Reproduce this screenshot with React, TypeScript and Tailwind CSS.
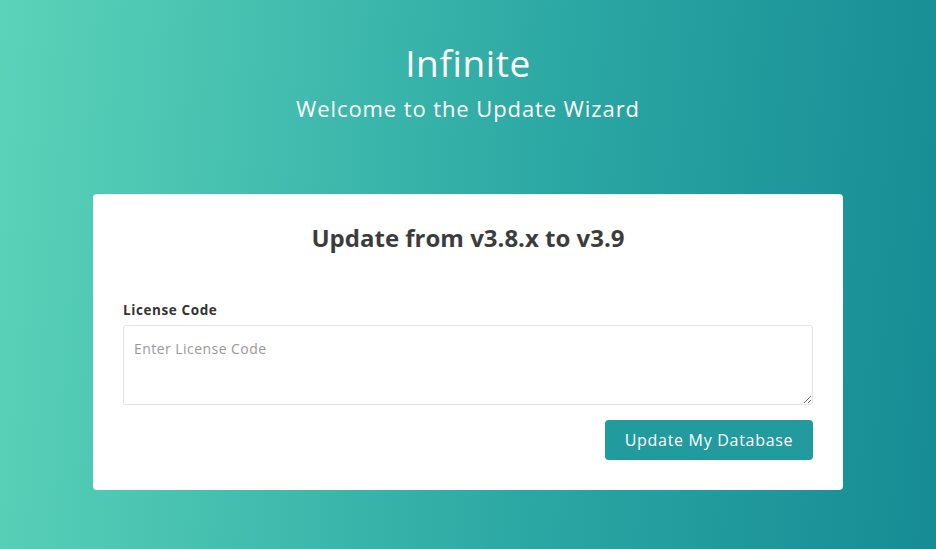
export default function App() {
  return (
    <div
      className="min-h-[549px] w-full bg-[linear-gradient(95deg,#5bd3b9_0%,#2aa6a3_60%,#168b94_100%)] px-[93px] pb-[59px] pt-[40px]"
      style={{ fontFamily: '"Open Sans", "Liberation Sans", sans-serif' }}
    >
      <div className="text-center text-white">
        <h1 className="text-[37px] leading-[46px] font-normal tracking-[0.6px]">Infinite</h1>
        <p className="mt-[8px] text-[22px] leading-[28px] tracking-[0.9px]">
          Welcome to the Update Wizard
        </p>
      </div>

      <div className="mt-[72px] rounded bg-white px-[30px] pb-[30px] pt-[30px]">
        <h2 className="text-center text-[24px] font-bold leading-[28px] text-[#3c3c3c]">
          Update from v3.8.x to v3.9
        </h2>

        <label className="mt-[48px] block text-[13.5px] font-bold leading-[20px] tracking-[0.6px] text-[#333]">
          License Code
        </label>
        <textarea
          className="mt-[5px] block h-[80px] w-full rounded-[3px] border border-[#e3e3e3] px-[10px] py-[12px] text-[14px] tracking-[0.45px] text-[#555] outline-none placeholder:text-[#999]"
          placeholder="Enter License Code"
        />

        <div className="mt-[15px] flex justify-end">
          <button
            className="h-[40px] w-[208px] rounded bg-[#229b9f] text-[16px] tracking-[0.7px] text-white"
            type="button"
          >
            Update My Database
          </button>
        </div>
      </div>
    </div>
  )
}
